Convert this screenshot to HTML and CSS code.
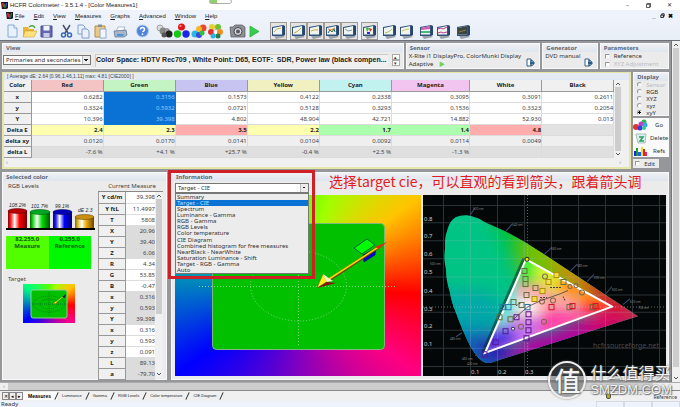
FILE: index.html
```
<!DOCTYPE html>
<html lang="en">
<head>
<meta charset="utf-8">
<title>HCFR Colorimeter - 3.5.1.4 - [Color Measures1]</title>
<link rel="stylesheet" href="styles.css">
</head>
<body>
<svg class="defs" aria-hidden="true">
  <symbol id="monitor" viewBox="0 0 17 18">
    <path d="M4 14l8-1 3 2-9 2z" fill="#9aa0a8"/>
    <path d="M13 3l2 1v9l-2 1z" fill="#27456c"/>
    <path d="M2 5l11-2v11H2z" fill="#35557f"/>
    <path d="M3 6l9-2v8.500H3z" fill="#eef4ee"/>
  </symbol>
  <symbol id="logo" viewBox="0 0 8 8">
    <path d="M0 0h8v7l-2 1H1z" fill="#15151c"/><path d="M1 1h2l1 5H2z" fill="#e02a20"/><path d="M4 2h1v5H4z" fill="#2fc43a"/><path d="M6 1h1l-1 5H5z" fill="#3b5cf0"/>
  </symbol>
  <symbol id="door" viewBox="0 0 9 9"><path d="M1 1h4v7H1zM5 2l2 1v4L5 8z" fill="#fff" stroke="#2e5d86"/><path d="M4 4h3V3l2 2-2 2V6H4z" fill="#2e5d86"/></symbol>
</svg>

<div class="app">
  <header class="title">
    <svg class="logo"><use href="#logo"/></svg>
    <h1>HCFR Colorimeter - 3.5.1.4 - [Color Measures1]</h1>
    <span class="pill"></span>
    <div class="winbtns"><button aria-label="Minimize">–</button><button aria-label="Restore"><svg viewBox="0 0 6 6"><path d="M.5 1.500h4v4h-4zM1.500 1.500v-1h4v4h-1" fill="none" stroke="#333"/></svg></button><button aria-label="Close">✕</button></div>
  </header>
  <nav class="menu">
    <svg class="logo"><use href="#logo"/></svg>
    <a href="#"><u>F</u>ile</a><a href="#"><u>E</u>dit</a><a href="#"><u>V</u>iew</a><a href="#"><u>M</u>easures</a><a href="#"><u>G</u>raphs</a><a href="#"><u>A</u>dvanced</a><a href="#"><u>W</u>indow</a><a href="#"><u>H</u>elp</a>
    <div class="winbtns strong"><button aria-label="Minimize document">_</button><button aria-label="Restore document"><svg viewBox="0 0 6 6"><path d="M1 2.500h3v3H1zM2 2V1h3v3H4" fill="none" stroke="#000"/></svg></button><button aria-label="Close document">✖</button></div>
  </nav>

  <div class="toolbar" role="toolbar">
    <div class="group">
      <button aria-label="New"><svg viewBox="0 0 17 18"><path d="M4 3h6l3 3v9H4z" fill="#e8f1fc" stroke="#86a8d6"/><path d="M10 3v3h3" fill="#fff" stroke="#86a8d6"/></svg></button>
      <button aria-label="Open"><svg viewBox="0 0 17 18"><path d="M2 5h5l1 2h5v8H2z" fill="#e8b434"/><path d="M4 9h12l-3 6H2z" fill="#ffe27a" stroke="#c89420" stroke-width=".5"/><path d="M8 5q4-3 6 1" fill="none" stroke="#4faa3c" stroke-width="1.500"/></svg></button>
      <button aria-label="Save"><svg viewBox="0 0 17 18"><path d="M3 4h11v11H3z" fill="#6668ad" stroke="#4b4d90"/><path d="M5.500 4h6v4.500h-6z" fill="#f2f4fb"/><path d="M5.500 11h6v4h-6z" fill="#c8cde8"/></svg></button>
    </div>
    <div class="group g3">
      <button aria-label="Cut"><svg viewBox="0 0 17 18"><path d="M5 3l5 8M12 3l-5 8" stroke="#46536b" stroke-width="1.500"/><circle cx="5.500" cy="13" r="2" fill="none" stroke="#3867b8" stroke-width="1.500"/><circle cx="11.500" cy="13" r="2" fill="none" stroke="#3867b8" stroke-width="1.500"/></svg></button>
      <button aria-label="Copy"><svg viewBox="0 0 17 18"><path d="M3 3h5l2 2v7H3z" fill="#eaf1fb" stroke="#7e9fce"/><path d="M7 7h5l2 2v7H7z" fill="#eaf1fb" stroke="#7e9fce"/></svg></button>
      <button aria-label="Paste"><svg viewBox="0 0 17 18"><path d="M3 4h10v11H3z" fill="#e9c987" stroke="#b28e4c"/><path d="M6 2.500h4v2.500H6z" fill="#8c8c96"/><path d="M8 7h6v9H8z" fill="#f3f7fd" stroke="#8fa8cc"/></svg></button>
    </div>
    <div class="group g3">
      <button aria-label="Print"><svg viewBox="0 0 17 18"><path d="M6 5h7l-2 5H4z" fill="#fff" stroke="#8da0b8" stroke-width=".7"/><path d="M2 9l12-1 1 5-3 2H3z" fill="#a8b6c8" stroke="#58708e" stroke-width=".7"/><path d="M5 12h7l-1 2H5z" fill="#4b94d8"/></svg></button>
    </div>
    <div class="group g5">
      <button aria-label="Help"><svg viewBox="0 0 17 18"><circle cx="8.500" cy="9" r="6" fill="#4d84d8" stroke="#b8cdec"/><path d="M6.500 7.500q0-2 2-2t2 2q0 1-2 2.500M8.500 11.500v1.500" fill="none" stroke="#fff" stroke-width="1.500"/></svg></button>
    </div>
    <div class="group g5">
      <button aria-label="Measure grays"><svg viewBox="0 0 17 18"><circle cx="4" cy="6" r="3" fill="#ddd" stroke="#777" stroke-width=".6"/><circle cx="7" cy="9" r="3.500" fill="#888"/><circle cx="11" cy="9" r="2.500" fill="#aaa" stroke="#555" stroke-width=".5"/><circle cx="13" cy="12" r="3.500" fill="#222"/><circle cx="8" cy="13" r="2.500" fill="#555"/></svg></button>
      <button aria-label="Measure primaries"><svg viewBox="0 0 17 18"><circle cx="8.500" cy="5" r="3.500" fill="#e51414"/><circle cx="4.500" cy="12" r="3.700" fill="#14c814"/><circle cx="13" cy="12" r="3.700" fill="#1a28e6"/><circle cx="7.500" cy="4" r="1" fill="#faa"/></svg></button>
      <button aria-label="Measure secondaries"><svg viewBox="0 0 17 18"><circle cx="13" cy="6" r="3.500" fill="#e84a2a"/><circle cx="9" cy="7" r="3" fill="#f0b830"/><circle cx="5" cy="12" r="3.500" fill="#28b8e0"/><circle cx="9" cy="13" r="3" fill="#3c46e0"/><circle cx="12" cy="11" r="2.500" fill="#30c040"/></svg></button>
      <button aria-label="Measure all"><svg viewBox="0 0 17 18"><circle cx="5" cy="5" r="3" fill="#e8d030"/><circle cx="11" cy="5" r="3" fill="#70c030"/><circle cx="4" cy="10" r="3" fill="#e03030"/><circle cx="9" cy="10" r="2.500" fill="#fff" stroke="#888" stroke-width=".5"/><circle cx="13" cy="10" r="3" fill="#f09020"/><circle cx="6" cy="14" r="2.500" fill="#30b0e0"/><circle cx="11" cy="14" r="2.500" fill="#208050"/></svg></button>
    </div>
    <div class="group g5">
      <button aria-label="Capture"><svg viewBox="0 0 17 18"><path d="M1 5h3l2-2h7l3 2v10H2z" fill="#8e9094" stroke="#55575c" stroke-width=".7"/><circle cx="9" cy="9.500" r="4" fill="#d8dade" stroke="#44464a"/><circle cx="9" cy="9.500" r="2" fill="#55585e"/></svg></button>
      <button aria-label="Play"><svg viewBox="0 0 17 18"><path d="M4 4l9 5.500L4 15z" fill="#35cf4c" stroke="#22a83a" stroke-width=".7"/></svg></button>
    </div>
    <div class="group g7">
      <button class="on" aria-label="Summary view"><svg viewBox="0 0 17 18"><use href="#monitor"/><path d="M4 10q2-4 7-4" fill="none" stroke="#d0b060"/></svg></button>
    </div>
    <div class="group g3">
      <button class="on" aria-label="Luminance"><svg viewBox="0 0 17 18"><use href="#monitor"/><path d="M4 11q4-1 7-5" fill="none" stroke="#b8a838"/></svg></button>
      <button class="on" aria-label="Gamma"><svg viewBox="0 0 17 18"><use href="#monitor"/><path d="M4 9q4-2 7-1" fill="none" stroke="#d8a838"/></svg></button>
      <button class="on" aria-label="RGB levels"><svg viewBox="0 0 17 18"><use href="#monitor"/><path d="M4 11l2-3 2 2 2-3 1 3" fill="none" stroke="#286848"/><path d="M4 7l3 1 4-2" fill="none" stroke="#d87a30"/></svg></button>
      <button class="on" aria-label="Color temperature"><svg viewBox="0 0 17 18"><use href="#monitor"/><path d="M4 7l3 2 4-1" fill="none" stroke="#8898a8"/></svg></button>
    </div>
    <div class="group g3">
      <button class="on" aria-label="CIE diagram"><svg viewBox="0 0 17 18"><use href="#monitor"/><path d="M5 6l2-1 1 2-2 3z" fill="#30c040"/><path d="M8 6l3 1-2 3z" fill="#e82020"/><path d="M6 10h3v2H6z" fill="#2030e0"/></svg></button>
    </div>
    <div class="group g3">
      <button aria-label="Near black"><svg viewBox="0 0 17 18"><use href="#monitor"/><path d="M4 11q5-1 7-4" fill="none" stroke="#a8c070"/></svg></button>
      <button aria-label="Near white"><svg viewBox="0 0 17 18"><use href="#monitor"/><path d="M4 9q4-2 7-2" fill="none" stroke="#d0c060"/></svg></button>
    </div>
    <div class="group g3">
      <button aria-label="Saturation"><svg viewBox="0 0 17 18"><use href="#monitor"/><path d="M3 6l9-2v3l-9 1z" fill="#d858b8"/><path d="M3 9h9v2H3z" fill="#48b878"/></svg></button>
      <button aria-label="Saturation shift"><svg viewBox="0 0 17 18"><use href="#monitor"/><path d="M3 7l3-1 2 1 4-2M3 11l3-1 2 1 4-1" fill="none" stroke="#c03898"/></svg></button>
    </div>
    <div class="group g3">
      <button aria-label="Histogram"><svg viewBox="0 0 17 18"><use href="#monitor"/><path d="M3 6l9-2v8.500H3z" fill="#3c4640"/><path d="M4 10l7-2" stroke="#8a7a50"/></svg></button>
    </div>
  </div>

  <div class="middle">
    <main class="workspace">
      <div class="row">
        <section class="panel view">
          <h2>View</h2>
          <div class="viewbody">
            <select class="combo" aria-label="View"><option>Primaries and secondaries</option></select>
            <output class="space">Color Space: HDTV Rec709 , White Point: D65, EOTF:&nbsp; SDR, Power law (black compen...</output>
            <div class="spin"><button aria-label="Up">▴</button><button aria-label="Down">▾</button></div>
          </div>
        </section>
        <section class="panel sensor">
          <h2>Sensor</h2>
          <p>X-Rite i1 DisplayPro, ColorMunki Display</p>
          <p>Adaptive <span class="go">▶</span></p>
          <svg class="door"><use href="#door"/></svg>
        </section>
        <section class="panel generator">
          <h2>Generator</h2>
          <p>DVD manual</p>
          <svg class="door"><use href="#door"/></svg>
        </section>
        <section class="panel params">
          <h2>Parameters</h2>
          <label><input type="checkbox">Reference</label>
          <label class="off"><input type="checkbox" disabled>XYZ Adjustment</label>
        </section>
      </div>

      <div class="row">
        <section class="panel grid">
          <h3>[ Average dE: 2.64 [0.96,1.46,1.11] max: 4.81 [CIE2000] ]</h3>
          <div class="tablewrap">
            <table class="measures">
              <colgroup><col class="c-label"><col class="c-val"><col class="c-val"><col class="c-val"><col class="c-val"><col class="c-val"><col class="c-wide"><col class="c-val"><col class="c-val"></colgroup>
              <thead><tr><th>Color</th><th class="red">Red</th><th class="green">Green</th><th class="blue">Blue</th><th class="yellow">Yellow</th><th class="cyan">Cyan</th><th class="magenta">Magenta</th><th>White</th><th>Black</th></tr></thead>
              <tbody>
                <tr><th>x</th><td>0.6282</td><td class="sel">0.3156</td><td>0.1573</td><td>0.4122</td><td>0.2338</td><td>0.3095</td><td>0.3091</td><td>0.2611</td></tr>
                <tr><th>y</th><td>0.3324</td><td class="sel">0.5932</td><td>0.0721</td><td>0.5128</td><td>0.3293</td><td>0.1536</td><td>0.3323</td><td>0.2054</td></tr>
                <tr><th>Y</th><td>10.396</td><td class="sel">39.398</td><td>4.802</td><td>48.904</td><td>42.721</td><td>14.882</td><td>52.930</td><td>0.013</td></tr>
                <tr class="de"><th>Delta E</th><td class="warn">2.4</td><td class="warn">2.3</td><td class="bad">3.5</td><td class="warn">2.2</td><td class="good">1.7</td><td class="good">1.4</td><td class="bad">4.8</td><td></td></tr>
                <tr class="dxy"><th>delta xy</th><td>0.0120</td><td>0.0170</td><td>0.0141</td><td>0.0104</td><td>0.0092</td><td>0.0114</td><td>0.0049</td><td></td></tr>
                <tr class="dl"><th>delta L</th><td>-7.6 %</td><td>+4.1 %</td><td>+25.7 %</td><td>-0.4 %</td><td>+2.5 %</td><td>-1.3 %</td><td></td><td></td></tr>
              </tbody>
            </table>
            <div class="vbar"><svg viewBox="0 0 8 7"><path d="M2 5l2-2 2 2"/></svg><i></i><svg viewBox="0 0 8 7"><path d="M2 2l2 2 2-2"/></svg></div>
          </div>
          <div class="hbar"><span>‹</span><span>›</span></div>
        </section>
        <aside class="side">
          <fieldset class="panel display">
            <legend>Display</legend>
            <label class="off"><input type="radio" name="d" disabled>Sensor</label>
            <label><input type="radio" name="d">RGB</label>
            <label><input type="radio" name="d">XYZ</label>
            <label><input type="radio" name="d">xyz</label>
            <label><input type="radio" name="d" checked>xyY</label>
          </fieldset>
          <div class="actions">
            <button><svg viewBox="0 0 15 12"><circle cx="11" cy="3" r="2.500" fill="#30b848"/><circle cx="8" cy="5" r="2.500" fill="#c040c8"/><circle cx="12" cy="6" r="2.500" fill="#38a8e0"/><circle cx="3" cy="8" r="3" fill="#e83030"/><circle cx="7" cy="9" r="2.500" fill="#3040e0"/><circle cx="11" cy="9" r="2" fill="#40c0a0"/></svg><span>Go</span></button>
            <button><svg viewBox="0 0 15 12"><path d="M3 2h10l-1 9H5z" fill="#dff2ee" stroke="#88a8a8" stroke-width=".7"/><path d="M6 5h4L7 9h4" fill="none" stroke="#28a060" stroke-width="1.500"/></svg><span>Delete</span></button>
            <button><svg viewBox="0 0 15 12"><path d="M1 6h2v5H1z" fill="#2020e0"/><path d="M3 3h2v8H3z" fill="#20a020"/><path d="M5 7h3v4H5z" fill="#2060e0"/><path d="M8 2h2v9H8z" fill="#e8e020"/><path d="M10 4h2v7h-2z" fill="#e02020"/><path d="M12 7h2v4h-2z" fill="#e02080"/></svg><span>Refs</span></button>
          </div>
          <label class="edit"><input type="checkbox">Edit</label>
        </aside>
      </div>

      <div class="row lower">
        <section class="panel selected">
          <h2>Selected color</h2>
          <div class="selbody">
            <div class="levels">
              <h4>RGB Levels</h4>
              <svg class="bars" viewBox="6 199 90 31">
                <defs>
                  <linearGradient id="cr"><stop stop-color="#800"/><stop offset=".15" stop-color="#f22"/><stop offset=".35" stop-color="#fff"/><stop offset=".6" stop-color="#f00"/><stop offset="1" stop-color="#700"/></linearGradient>
                  <linearGradient id="cg"><stop stop-color="#060"/><stop offset=".15" stop-color="#2d2"/><stop offset=".35" stop-color="#fff"/><stop offset=".6" stop-color="#0d0"/><stop offset="1" stop-color="#050"/></linearGradient>
                  <linearGradient id="cb"><stop stop-color="#008"/><stop offset=".15" stop-color="#22f"/><stop offset=".35" stop-color="#fff"/><stop offset=".6" stop-color="#00f"/><stop offset="1" stop-color="#006"/></linearGradient>
                  <linearGradient id="cy"><stop stop-color="#860"/><stop offset=".15" stop-color="#db2"/><stop offset=".35" stop-color="#fff"/><stop offset=".6" stop-color="#ea0"/><stop offset="1" stop-color="#640"/></linearGradient>
                </defs>
                <path d="M8 210h19v17H8z" fill="url(#cr)"/><ellipse cx="17.500" cy="210" rx="9.500" ry="2.500" fill="#b80000" stroke="#500" stroke-width=".5"/>
                <path d="M30 211h20v16H30z" fill="url(#cg)"/><ellipse cx="40" cy="211" rx="10" ry="2.500" fill="#00a828" stroke="#040" stroke-width=".5"/>
                <path d="M53 211h19v16H53z" fill="url(#cb)"/><ellipse cx="62.500" cy="211" rx="9.500" ry="2.500" fill="#0000b8" stroke="#004" stroke-width=".5"/>
                <path d="M75 216h19v11H75z" fill="url(#cy)"/><ellipse cx="84.500" cy="216" rx="9.500" ry="2.500" fill="#c89010" stroke="#530" stroke-width=".5"/>
                <path d="M6 228h89" stroke="#000" stroke-width="2"/>
                <g class="barlabels"><text x="9" y="206">108.2%</text><text x="31" y="207">101.7%</text><text x="55" y="207">99.1%</text><text x="78" y="211">dE 2.3</text></g>
              </svg>
              <div class="swatches"><div class="sm">82,255,0<br>Measure</div><div class="sr">0,255,0<br>Reference</div></div>
              <h4>Target</h4>
              <div class="thumb hue">
                <svg viewBox="0 0 52 39"><rect x="8" y="6" width="36" height="28" rx="2" fill="#00c000" stroke="#8fd08f"/><g fill="none" stroke="#063" stroke-dasharray="1 1" stroke-width=".7"><ellipse cx="26" cy="20" rx="16" ry="8"/><ellipse cx="26" cy="20" rx="9" ry="5"/><path d="M9 20h34M26 8v24"/></g><path d="M30 20l3-3 1 2z" fill="#ff0" stroke="#a60" stroke-width=".5"/><path d="M33 18l8-6" stroke="#e8c020"/><path d="M39 13l4-3-1 4z" fill="#124"/></svg>
              </div>
            </div>
            <div class="current">
              <h4>Current Measure</h4>
              <div class="curwrap">
                <table class="cur">
                  <tr><th>Y cd/m</th><td>39.398</td></tr><tr><th>Y ftL</th><td>11.4997</td></tr><tr><th>T</th><td>5808</td></tr>
                  <tr class="g"><th>X</th><td>20.96</td></tr><tr class="g"><th>Y</th><td>39.40</td></tr><tr class="g"><th>Z</th><td>6.06</td></tr>
                  <tr><th>R</th><td>4.34</td></tr><tr><th>G</th><td>53.85</td></tr><tr><th>B</th><td>-0.47</td></tr>
                  <tr class="g"><th>x</th><td>0.316</td></tr><tr class="g"><th>y</th><td>0.593</td></tr><tr class="g"><th>Y</th><td>39.398</td></tr>
                  <tr><th>x</th><td>0.316</td></tr><tr><th>y</th><td>0.593</td></tr><tr><th>z</th><td>0.091</td></tr>
                  <tr class="g"><th>L</th><td>89.13</td></tr><tr class="g"><th>a</th><td>-79.70</td></tr>
                </table>
                <div class="vbar"><svg viewBox="0 0 8 7"><path d="M2 5l2-2 2 2"/></svg><i class="part"></i><svg viewBox="0 0 8 7"><path d="M2 2l2 2 2-2"/></svg></div>
              </div>
            </div>
          </div>
        </section>

        <section class="panel info">
          <h2>Information</h2>
          <div class="infobar">
            <select class="combo" aria-label="Information"><option>Target - CIE</option></select>
            <ul class="list" role="listbox">
              <li>Summary</li><li class="cursel">Target - CIE</li><li>Spectrum</li><li>Luminance - Gamma</li><li>RGB - Gamma</li><li>RGB Levels</li><li>Color temperature</li><li>CIE Diagram</li><li>Combined histogram for free measures</li><li>NearBlack - NearWhite</li><li>Saturation Luminance - Shift</li><li>Target - RGB - Gamma</li><li>Auto</li>
            </ul>
          </div>
          <div class="graphs">
            <div class="target hue">
              <svg viewBox="176 194 246 181" preserveAspectRatio="none">
                <rect x="213.500" y="222.500" width="172" height="126" rx="4" fill="#00c000" stroke="#7db87d"/>
                <g fill="none" stroke="#7fd87f" stroke-dasharray="1 2"><ellipse cx="299.500" cy="285" rx="48" ry="35"/><path d="M200 285.500h198"/><path d="M299.500 226v120"/></g>
                <path d="M355 247l13-9 8 6-13 9z" fill="#0f0" stroke="#064" />
                <path d="M364 254l13-7-1 7-11 7z" fill="#00d" stroke="#003" stroke-width=".5"/>
                <path d="M327 281L380 246" stroke="#6b4a00" stroke-width="3"/><path d="M327 280L381 245" stroke="#ffd800" stroke-width="1.500"/>
                <path d="M376 246l12-5-8 7z" fill="#e02a10"/>
                <path d="M318 287l6-14 5 7z" fill="#ffee20" stroke="#806000" stroke-width=".5"/><path d="M324 273l10 7-6 1z" fill="#f4f0d0"/><path d="M318 287l10-6 9 1z" fill="#8a1408"/>
              </svg>
            </div>
            <div class="cie">
              <svg viewBox="424 195 243 180" preserveAspectRatio="none">
                <defs>
                  <clipPath id="locus"><path d="M487 362C480 360 474 351 469 341C465 332 460 321 457 312C453 302 452 298 451 292C448 282 447 276 447 269C445 260 445 255 446 248C446 240 446 236 448 231C450 224 452 220 457 217C461 215 469 214 475 217Q480 218 486 222L506 231L526 242L545 254L639 315.500L491 362Z"/></clipPath>
                  <clipPath id="gamut"><path d="M527 258L613 306L486 353Z"/></clipPath>
                  <filter id="b9" x="-50%" y="-50%" width="200%" height="200%"><feGaussianBlur stdDeviation="9"/></filter>
                  <filter id="b6" x="-50%" y="-50%" width="200%" height="200%"><feGaussianBlur stdDeviation="6"/></filter>
                </defs>
                <path d="M424 195h243v180H424z" fill="#030708"/>
                <g clip-path="url(#locus)">
                  <path d="M424 195h243v180H424z" fill="#00c484"/>
                  <g filter="url(#b9)">
                    <path d="M485 190h50l20 60-20 60z" fill="#00c020"/><path d="M430 290h60l20 20-10 30h-60z" fill="#00a8a8"/>
                    <path d="M530 225l50 30-10 30-50-20z" fill="#78c000"/><path d="M560 240l50 40-15 30-40-30z" fill="#c89000"/>
                    <path d="M585 265l75 50-20 20-50-35z" fill="#d02808"/><path d="M600 305l50 10-60 35-50-15z" fill="#d80060"/>
                    <path d="M520 335l80-15-30 50h-70z" fill="#b000a0"/><path d="M440 330h50l30 15-20 35h-50z" fill="#0068b8"/><path d="M470 345l25-15 25 20-20 20z" fill="#2808b0"/>
                  </g>
                </g>
                <path d="M484 351L525 258" stroke="#02302c" stroke-width="3" opacity=".6"/>
                <g clip-path="url(#gamut)">
                  <path d="M480 250h140v110H480z" fill="#ffa0a0"/>
                  <g filter="url(#b6)"><path d="M510 245h35l-5 38h-20z" fill="#30f030"/><path d="M540 250l40 20-20 25-25-15z" fill="#d8f030"/><path d="M570 270l55 35-30 5-40-25z" fill="#ff9018"/><path d="M590 300h35l-20 20-35-5z" fill="#ff1828"/><path d="M550 310l45 2-50 25-30-5z" fill="#ff40a8"/><path d="M505 320l40-5-10 30-30 5z" fill="#c870f0"/><path d="M480 330l30-5 10 15-40 20z" fill="#5030e0"/><path d="M490 290l25-15 5 35-20 20z" fill="#60e8e0"/><ellipse cx="529" cy="305" rx="12" ry="9" fill="#fff"/></g>
                </g>
                <g class="gridlines"><path d="M444.500 195v180M471.500 195v180M498.500 195v180M525.500 195v180M552.500 195v180M579.500 195v180M606.500 195v180M633.500 195v180M660.500 195v180M424 205.500h243M424 222.500h243M424 240.500h243M424 258.500h243M424 276.500h243M424 294.500h243M424 311.500h243M424 329.500h243M424 347.500h243M424 365.500h243"/></g>
                <path class="whitept" d="M528.500 195v180M424 306.500h243"/>
                <path d="M527 259L613 306L486 352Z" fill="none" stroke="#fff" stroke-width="2"/>
                <g fill="none" stroke-width="1">
                  <path d="M523 268h5v5h-5zM524 276h5v5h-5zM524 281h5v5h-5zM525 292h5v5h-5zM534 285h5v5h-5zM520 302h5v5h-5zM512 299h5v5h-5zM498 314h5v5h-5zM509 316h5v5h-5zM562 279h5v5h-5zM568 304h5v5h-5zM591 304h5v5h-5z" stroke="#66703c"/>
                  <path d="M541 288h5v5h-5zM533 296h5v5h-5zM547 279h5v5h-5zM555 272h5v5h-5z" stroke="#b09000" fill="#f0dc50"/>
                  <path d="M527 311h5v5h-5zM527 319h5v5h-5zM527 327h5v5h-5zM525 335h5v5h-5zM515 314h5v5h-5zM504 328h5v5h-5zM494 339h5v5h-5zM483 351h5v5h-5z" stroke="#5c1490"/>
                  <path d="M550 304h5v5h-5zM571 303h5v5h-5zM594 303h5v5h-5zM615 304h5v5h-5z" stroke="#d01828"/>
                  <path d="M501 304h5v5h-5zM507 304h5v5h-5zM526 304h5v5h-5z" stroke="#2878a8"/>
                  <g stroke="#806848"><circle cx="545" cy="321" r="2.500"/><circle cx="522" cy="326" r="2.500"/><circle cx="546" cy="276" r="2.500"/><circle cx="543" cy="301" r="2.500"/><circle cx="583" cy="292" r="2.500"/><circle cx="577" cy="285" r="2"/><circle cx="554" cy="300" r="2.500"/><circle cx="571" cy="286" r="2"/></g>
                  <circle cx="514" cy="328" r="1.500" stroke="#335" fill="#fff"/><circle cx="528" cy="259" r="2" stroke="#332" fill="#ee0"/>
                  <path d="M515 318l14-12 13-6 20-7 7-3" stroke="#333" stroke-width=".7"/>
                  <path d="M551 287h11M566 300l-2-4M541 297h7M517 305l5-3" stroke="#444" stroke-dasharray="2 1"/>
                </g>
                <path d="M471 215l5-7M507 231l6-7M545 254l8-7M571 271l7-7M588 281l7-7M607 293l6-7M624 304l7-6M457 336l6-4M476 355l5-2" stroke="#3c4a70" fill="none"/>
                <g class="nm"><text x="474" y="210">520 nm</text><text x="513" y="226">540 nm</text><text x="431" y="265">500 nm</text><text x="451" y="339">480 nm</text><text x="463" y="359">460 nm</text><text x="468" y="364">420 nm</text><text x="552" y="250">560 nm</text><text x="578" y="267">580 nm</text><text x="595" y="279">590 nm</text><text x="613" y="290">600 nm</text><text x="631" y="302">620 nm</text><text x="639" y="308">700 nm</text></g>
                <g class="axis"><text x="425" y="221">0.8</text><text x="425" y="238">0.7</text><text x="425" y="256">0.6</text><text x="425" y="274">0.5</text><text x="425" y="292">0.4</text><text x="425" y="310">0.3</text><text x="425" y="327">0.2</text><text x="425" y="345">0.1</text><text x="472" y="373">0.1</text><text x="499" y="373">0.2</text><text x="526" y="373">0.3</text></g>
                <text class="site" x="594" y="347">hcfr.sourceforge.net</text>
              </svg>
            </div>
          </div>
          <div class="callout"></div>
          <p class="note">选择target cie，可以直观的看到箭头，跟着箭头调</p>
        </section>
      </div>
    </main>
    <div class="vbar page"><svg viewBox="0 0 8 7"><path d="M2 5l2-2 2 2"/></svg><i></i><svg viewBox="0 0 8 7"><path d="M2 2l2 2 2-2"/></svg></div>
  </div>

  <div class="hbar page"><span>‹</span><i></i><span>›</span></div>
  <div class="tabs">
    <button class="nav">✕</button><button class="nav">◂</button><button class="nav">▸</button>
    <a href="#" class="cur-tab">Measures</a><a href="#">Luminance</a><a href="#">Gamma</a><a href="#">RGB Levels</a><a href="#">Color temperature</a><a href="#">CIE Diagram</a>
    <span class="lamp"></span>
  </div>
  <footer class="status"><span>Ready</span><i></i><i></i><i></i></footer>

  <div class="mark">
    <span class="badge">值</span>
    <div><b>什么值得买</b><em>SMZDM.COM</em></div>
  </div>
  <span class="refname">Reference</span>
</div>
</body>
</html>
```
FILE: styles.css
```
* { box-sizing: border-box; margin: 0; padding: 0; }
html { background: #fff; }
body { font: 6px/8px "Noto Sans", "Noto Sans CJK SC", sans-serif; color: #333; }
button { border: 0; background: none; font: inherit; color: inherit; display: block; }
a { color: inherit; text-decoration: none; }
svg { display: block; }
.defs { position: absolute; width: 0; height: 0; }
.app { position: relative; display: flex; flex-direction: column; min-height: 100vh; overflow: hidden; }

.title { display: flex; align-items: center; height: 10px; padding-left: 1px; background: #fff; position: relative; }
.logo { width: 7px; height: 7px; margin-right: 2px; flex: none; }
.title h1 { font: 6px/10px "Liberation Sans", sans-serif; color: #222; }
.pill { position: absolute; left: 209px; top: -1px; width: 23px; height: 5px; border: 1px solid #aaa; border-radius: 3px; background: linear-gradient(90deg, #8fcf6c 35%, #fff 35%); }
.winbtns { display: flex; margin-left: auto; }
.winbtns button { width: 21px; font-size: 6px; display: flex; justify-content: center; align-items: center; color: #333; }
.winbtns svg { width: 5px; height: 5px; }
.winbtns.strong { padding-right: 6px; }
.winbtns.strong button { width: 8px; color: #000; font-weight: 700; }

.menu { display: flex; align-items: center; height: 11px; background: #eef2fa; padding-left: 6px; gap: 9px; color: #222; font: 6px/8px "Liberation Sans", sans-serif; }
.menu .logo { margin-right: -7px; }
.menu a { white-space: nowrap; }

.toolbar { display: flex; height: 20px; padding: 1px 0 0 4px; background: linear-gradient(#eef2fa, #e8eef7); border-bottom: 1px solid #6c7078; }
.group { display: flex; }
.g3 { margin-left: 3px; } .g5 { margin-left: 5px; } .g7 { margin-left: 7px; }
.toolbar button { width: 17px; height: 18px; }
.toolbar svg { width: 17px; height: 18px; }
.toolbar .on { background: #e4e4e4; border: 1px solid #a09a94; }
.toolbar .on svg { margin: -1px; }

.middle { display: flex; flex: 1; }
.workspace { flex: 1; min-width: 0; display: flex; flex-direction: column; gap: 3px; padding: 2px; background: #96979a; }
.row { display: flex; gap: 2px; }
.panel { position: relative; background: #ebebeb; border: 1px solid #f8f8f8; min-width: 0; }
.panel h2, .display legend { font: 700 6px/8px "Noto Sans", sans-serif; color: #5b6675; background: linear-gradient(#eef1f5, #dfe5ee); padding-left: 3px; white-space: nowrap; }
.panel p { white-space: nowrap; padding-left: 2px; }
.view { flex: 404; } .sensor { flex: 134; } .generator { flex: 54; } .params { flex: 68; }
.view, .sensor, .generator, .params { height: 26px; }
.door { position: absolute; right: 4px; bottom: 1px; width: 9px; height: 9px; }
.go { color: #6fd24e; margin-left: 4px; }
.off { color: #bbb; }
label { display: flex; align-items: center; gap: 4px; white-space: nowrap; }
input { appearance: none; width: 5px; height: 5px; border: 1px solid #999; border-right-color: #eee; border-bottom-color: #eee; background: #fff; flex: none; }
.params label { padding-left: 4px; }
input[type=radio] { border-radius: 3px; }
input[type=radio]:checked { background: radial-gradient(#000 50%, #fff 60%); }

.combo { appearance: none; font: 6px/8px "Noto Sans", sans-serif; color: #333; height: 10px; padding-left: 2px; border: 1px solid #777; border-radius: 0; background: linear-gradient(45deg, transparent 50%, #222 50%) no-repeat right 4px top 3px / 2px 2px, linear-gradient(-45deg, transparent 50%, #222 50%) no-repeat right 2px top 3px / 2px 2px, linear-gradient(90deg, #bbb 1px, #ececec 1px) no-repeat right / 8px 100%, #fff; }
.viewbody { display: flex; align-items: center; gap: 4px; height: 16px; }
.view .combo { width: 88px; margin-top: -1px; }
.space { flex: 1; font: 700 7px/10px "Liberation Sans", sans-serif; color: #222; border: 1px solid #ccc; border-width: 1px 0 0 1px; background: #f0f0f0; white-space: nowrap; overflow: hidden; height: 13px; }
.spin button { width: 8px; height: 6px; border: 1px solid #aaa; background: #fff; font-size: 5px; line-height: 4px; margin-right: 3px; }

.grid { flex: 629; border-color: #e6e6a8; border-width: 1px 2px 2px; height: 97px; background: #f0f0f0; padding-bottom: 1px; }
.grid h3 { font: 5px/7px "Liberation Sans", sans-serif; color: #444; padding-left: 3px; background: #e3eaf4; }
.tablewrap { display: flex; margin-right: 7px; }
.measures { flex: 1; border-collapse: collapse; table-layout: fixed; background: #fff; width: 0; }
.c-label { width: 27px; } .c-val { width: 72px; } .c-wide { width: 78px; }
.measures th, .measures td { height: 11px; font: 6px/8px "Noto Sans", sans-serif; border: 1px solid #dcdcdc; border-width: 0 1px 1px 0; white-space: nowrap; text-align: right; color: #444; }
.measures th { font-weight: 700; text-align: center; background: #f0f0f0; color: #222; border-color: #999; }
.measures .red { background: #f4c4c4; } .measures .green { background: #c4f4c4; } .measures .blue { background: #c8c4f2; }
.measures .yellow { background: #f0f0c0; } .measures .cyan { background: #c2f2f0; } .measures .magenta { background: #f2c4f0; }
.measures .sel { background: #0a72d4; color: #8cc8ff; border-color: #0a72d4; }
.measures .de td { font-weight: 700; color: #222; background: #e2e2e2; }
.measures .de .warn { background: #ffffb0; } .measures .de .bad { background: #ffacac; } .measures .de .good { background: #acffac; }
.measures .dxy td { background: #efefef; } .measures .dl td { background: #dfdfdf; }
.vbar { width: 8px; display: flex; flex-direction: column; align-items: center; background: #f0f0f0; }
.vbar svg { width: 8px; height: 7px; flex: none; fill: none; stroke: #555; }
.vbar i { flex: 1; width: 6px; background: #cdcdcd; }
.vbar .part { flex: none; height: 115px; margin-bottom: auto; }
.hbar { display: flex; justify-content: space-between; height: 8px; line-height: 8px; padding: 0 8px 0 2px; color: #888; }
.vbar.page { width: 9px; background: #f0f0f0; border-left: 1px solid #777; }
.vbar.page i { margin-bottom: 8px; }
.hbar.page { background: #f0f0f0; border-top: 1px solid #aaa; padding: 0 10px 0 3px; gap: 3px; line-height: 6px; }
.hbar.page i { flex: 1; background: #cdcdcd; margin-right: 12px; }

.side { flex: 36; display: flex; flex-direction: column; gap: 2px; }
.display { height: 44px; border: 1px solid #f8f8f8; }
.display legend { float: left; width: 100%; }
.display label { clear: both; height: 7px; padding-left: 3px; }
.actions { background: #fafafa; display: flex; flex-direction: column; }
.actions button { display: flex; align-items: center; gap: 1px; height: 13px; }
.actions span { flex: 1; text-align: center; }
.actions svg { width: 15px; height: 12px; flex: none; }
.edit { background: #ebebeb; height: 9px; width: 26px; padding-left: 2px; }

.lower { flex: 1; gap: 4px; }
.selected { flex: 166; }
.selbody { display: flex; gap: 2px; padding-left: 3px; }
.selbody h4 { font-weight: 400; font-size: 6px; line-height: 8px; color: #444; }
.levels { width: 90px; padding-top: 1px; }
.levels h4 { padding-left: 2px; }
.bars { width: 90px; height: 31px; margin: 10px 0 5px; }
.barlabels { font: italic 5px "Liberation Sans", sans-serif; fill: #222; }
.swatches { display: flex; width: 85px; height: 33px; margin-bottom: 6px; text-align: center; font-weight: 700; line-height: 7px; }
.swatches div { flex: 1; color: #0b5c10; }
.sm { background: #52ff00; } .sr { background: #00f800; }
.thumb { width: 52px; height: 39px; margin: 1px 0 0 17px; }
.hue { background: conic-gradient(#58ff00 0deg, #a0ff00 20deg, #ffc400 54deg, #ff0000 94deg, #ff0080 126deg, #8000c0 180deg, #0000ff 234deg, #0080c0 270deg, #00ff80 306deg, #58ff00 360deg); }
.current { flex: 1; }
.current h4 { text-align: center; padding-top: 1px; height: 10px; }
.curwrap { display: flex; height: 187px; margin-right: 3px; border-top: 1px solid #888; }
.cur { flex: 1; border-collapse: collapse; table-layout: fixed; background: #fff; }
.cur th { width: 27px; background: #f0f0f0; border: 1px solid #999; border-width: 0 1px 1px; color: #222; }
.cur td { border-bottom: 1px solid #ddd; text-align: right; color: #444; }
.cur th, .cur td { height: 11px; line-height: 8px; white-space: nowrap; }
.cur .g td { background: #dcdcdc; }

.info { flex: 500; padding: 0 2px 3px 3px; }
.info h2 { margin: 0 -2px 0 -3px; padding-left: 4px; }
.infobar { position: relative; height: 14px; padding-top: 2px; }
.infobar .combo { display: block; width: 134px; }
.list { position: absolute; z-index: 2; left: 0; top: 12px; width: 134px; height: 81px; list-style: none; display: flex; flex-direction: column; background: #ececec; border: 1px solid #777; line-height: 6px; }
.list li { flex: 1; padding-left: 1px; white-space: nowrap; }
.cursel { background: #0a72d4; color: #bfe0ff; }
.graphs { display: flex; gap: 2px; }
.target { flex: 246; } .cie { flex: 243; }
.graphs svg { width: 100%; height: 181px; }
.gridlines { stroke: #a8b8c0; stroke-opacity: .25; fill: none; }
.whitept { stroke: #c8d0d0; stroke-opacity: .5; stroke-dasharray: 1 2; fill: none; }
.nm { font: 3px "Noto Sans", sans-serif; fill: #888; }
.axis { font: 6px "Noto Sans", sans-serif; fill: #ccc; }
.site { font: 7px "Noto Sans", sans-serif; fill: #4a4a4a; }
.callout { position: absolute; z-index: 3; left: -4px; top: -3px; width: 147px; height: 109px; border: 3px solid #cf2028; }
.panel .note { position: absolute; left: 155px; top: -2px; font: 14px/20px "Noto Sans CJK SC", sans-serif; color: #e01c24; }

.tabs { display: flex; align-items: center; height: 11px; background: #f0f0f0; border-top: 1px solid #888; font: 4px/8px "Liberation Sans", sans-serif; padding-left: 2px; }
.nav { width: 7px; height: 8px; border: 1px solid #888; font-size: 5px; line-height: 5px; text-align: center; color: #000; }
.tabs a { position: relative; padding: 0 6px 0 5px; color: #222; white-space: nowrap; }
.tabs a::after { content: ""; position: absolute; right: 0; top: 0; width: 1px; height: 8px; background: #333; transform: rotate(25deg); }
.tabs .cur-tab { font-size: 5px; font-weight: 700; background: #fff; color: #000; }
.lamp { width: 5px; height: 6px; border-radius: 2px; background: #b8a820; border: 1px solid #554; margin: 0 69px 0 auto; }
.status { display: flex; height: 8px; background: #eef3fb; padding-left: 1px; line-height: 7px; }
.status span { flex: 1; }
.status i { width: 28px; border: 1px solid #d4dbe6; }

.mark { position: absolute; right: 8px; bottom: 10px; display: flex; align-items: center; gap: 4px; color: #f4f4f4; z-index: 5; font-family: "Noto Sans CJK SC", sans-serif; text-shadow: 0 0 2px #555, 1px 1px 1px #777; }
.badge { width: 38px; height: 38px; border: 2px solid #eee; border-radius: 50%; background: rgba(90, 90, 90, .5); font-size: 26px; line-height: 33px; font-weight: 500; text-align: center; box-shadow: 0 0 2px #666; }
.mark b { display: block; font-size: 16px; line-height: 20px; font-weight: 400; }
.mark em { display: block; font: 13px/16px "Liberation Sans", sans-serif; }
.refname { position: absolute; right: 3px; bottom: 9px; line-height: 6px; font-size: 5px; }
```
